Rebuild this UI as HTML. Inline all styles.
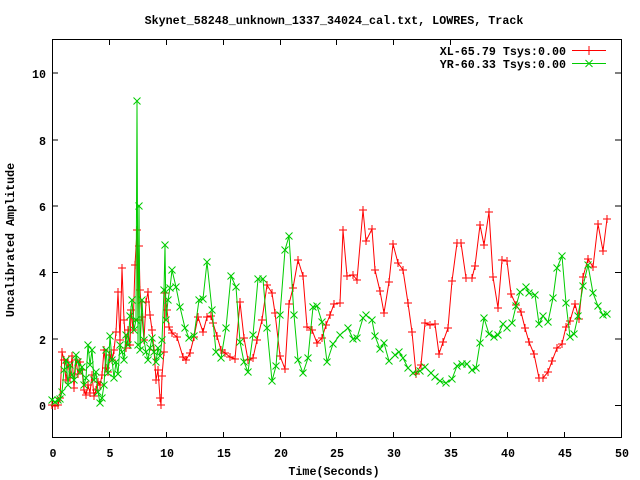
<!DOCTYPE html>
<html><head><style>
body{margin:0;background:#fff;}
svg{display:block;}
text{font-family:"Liberation Mono","DejaVu Sans Mono",monospace;font-size:11.7px;font-weight:bold;fill:#000;}
</style></head><body>
<svg width="640" height="480" viewBox="0 0 640 480" xmlns="http://www.w3.org/2000/svg">
<defs>
<marker id="p" markerUnits="userSpaceOnUse" markerWidth="10" markerHeight="10" refX="5" refY="5" overflow="visible"><path d="M1,5H9M5,1V9" stroke="#f00" stroke-width="1" fill="none"/></marker>
<marker id="x" markerUnits="userSpaceOnUse" markerWidth="10" markerHeight="10" refX="5" refY="5" overflow="visible"><path d="M1.5,1.5L8.5,8.5M8.5,1.5L1.5,8.5" stroke="#0c0" stroke-width="1" fill="none"/></marker>
</defs>
<text x="334" y="24" text-anchor="middle">Skynet_58248_unknown_1337_34024_cal.txt, LOWRES, Track</text>
<rect x="52.5" y="39.5" width="569" height="398" fill="none" stroke="#000" stroke-width="1"/>
<g stroke="#000" stroke-width="1">
<path d="M52,405.5h6M52,339h6M52,272.5h6M52,206h6M52,140h6M52,73h6M621,405.5h-6M621,339h-6M621,272.5h-6M621,206h-6M621,140h-6M621,73h-6"/>
<path d="M109.5,438v-6M166.5,438v-6M223.5,438v-6M280.5,438v-6M336.5,438v-6M393.5,438v-6M450.5,438v-6M507.5,438v-6M564.5,438v-6M109.5,39v6M166.5,39v6M223.5,39v6M280.5,39v6M336.5,39v6M393.5,39v6M450.5,39v6"/>
</g>
<g text-anchor="end">
<text x="46" y="410">0</text><text x="46" y="344">2</text><text x="46" y="277">4</text><text x="46" y="211">6</text><text x="46" y="145">8</text><text x="46" y="78">10</text>
</g>
<g text-anchor="middle">
<text x="53" y="457">0</text><text x="110" y="457">5</text><text x="167" y="457">10</text><text x="224" y="457">15</text><text x="281" y="457">20</text><text x="337" y="457">25</text><text x="394" y="457">30</text><text x="451" y="457">35</text><text x="508" y="457">40</text><text x="565" y="457">45</text><text x="622" y="457">50</text>
<text x="334" y="475">Time(Seconds)</text>
<text transform="translate(14,240) rotate(-90)">Uncalibrated Amplitude</text>
</g>
<g text-anchor="end"><text x="566" y="55">XL-65.79 Tsys:0.00</text><text x="566" y="68">YR-60.33 Tsys:0.00</text></g>
<path d="M572,50.5h34" stroke="#f00"/><path d="M589,46v9" stroke="#f00"/>
<path d="M572,63.5h34" stroke="#0c0"/><path d="M585.5,60l7,7M592.5,60l-7,7" stroke="#0c0"/>
<polyline fill="none" stroke="#f00" stroke-width="1" marker-start="url(#p)" marker-mid="url(#p)" marker-end="url(#p)" points="52,405 55,406 58,405 60,398 62,352 64,360 66,380 68,362 70,378 72,356 74,388 76,360 78,374 80,362 82,370 84,390 86,395 88,385 90,393 92,375 94,396 96,390 98,382 100,385 102,375 104,350 106,368 108,372 110,355 112,360 114,350 116,332 118,292 120,340 122,268 124,320 126,348 128,330 130,345 131,310 133,330 135,265 137,230 138,320 139,246 140,290 142,317 144,340 146,302 148,292 150,315 152,330 154,350 156,380 158,370 160,398 161,405 162,376 164,352 165,293 167,310 169,327 172,333 177,337 183,357 186,360 190,353 194,337 198,317 203,332 207,317 211,316 213,323 217,336 221,350 225,353 230,357 235,359 240,302 244,338 248,360 253,358 257,340 262,320 267,285 272,293 275,313 280,356 285,369 289,304 293,288 298,260 303,276 307,327 312,330 317,343 322,338 326,325 330,315 334,304 340,303 343,230 347,276 353,275 357,280 363,210 366,241 372,229 375,270 380,291 384,313 389,282 393,244 398,263 403,270 408,303 412,332 416,374 421,365 425,323 430,325 435,324 439,354 443,342 448,328 452,281 457,243 461,243 466,278 472,278 475,266 480,225 484,245 489,212 493,277 498,308 502,260 507,261 511,294 516,305 521,312 525,328 529,342 534,354 539,378 543,378 548,372 552,361 557,348 562,344 566,327 570,321 575,304 579,319 583,277 588,259 593,267 598,224 603,251 607,219"/>
<polyline fill="none" stroke="#0c0" stroke-width="1" marker-start="url(#x)" marker-mid="url(#x)" marker-end="url(#x)" points="52,400 55,402 58,400 60,399 62,392 64,370 66,360 68,385 70,365 72,375 74,380 76,355 78,362 80,372 82,367 84,385 86,378 88,345 90,365 92,350 94,380 96,372 98,392 100,403 102,398 104,385 106,350 108,373 110,336 112,360 114,378 116,362 118,374 120,345 122,352 124,360 126,335 128,345 130,316 132,300 134,330 136,320 137,101 138,345 139,206 140,350 142,300 144,340 146,352 148,360 150,348 152,338 154,352 156,362 158,348 160,356 162,340 164,290 165,245 166,320 168,300 170,288 172,270 176,287 180,307 185,328 189,338 194,336 199,300 203,299 207,262 212,310 216,352 221,358 226,328 231,276 236,287 240,342 244,362 248,372 253,335 258,279 263,279 267,328 272,381 276,366 280,315 285,250 289,236 294,315 298,360 303,373 308,358 313,307 317,306 322,322 327,362 333,344 340,335 348,328 353,339 357,338 363,318 366,315 372,320 375,336 380,349 384,343 389,361 395,355 399,352 403,358 408,368 413,373 420,371 425,367 431,373 435,377 440,381 446,383 452,379 457,366 462,364 467,364 472,370 476,368 480,343 484,318 489,334 494,337 498,335 503,324 507,328 512,323 516,306 520,292 526,287 529,293 535,295 539,324 543,316 548,322 553,298 557,268 562,256 566,303 570,337 574,334 578,316 583,286 588,265 593,293 598,306 603,315 607,314"/>
</svg>
</body></html>
